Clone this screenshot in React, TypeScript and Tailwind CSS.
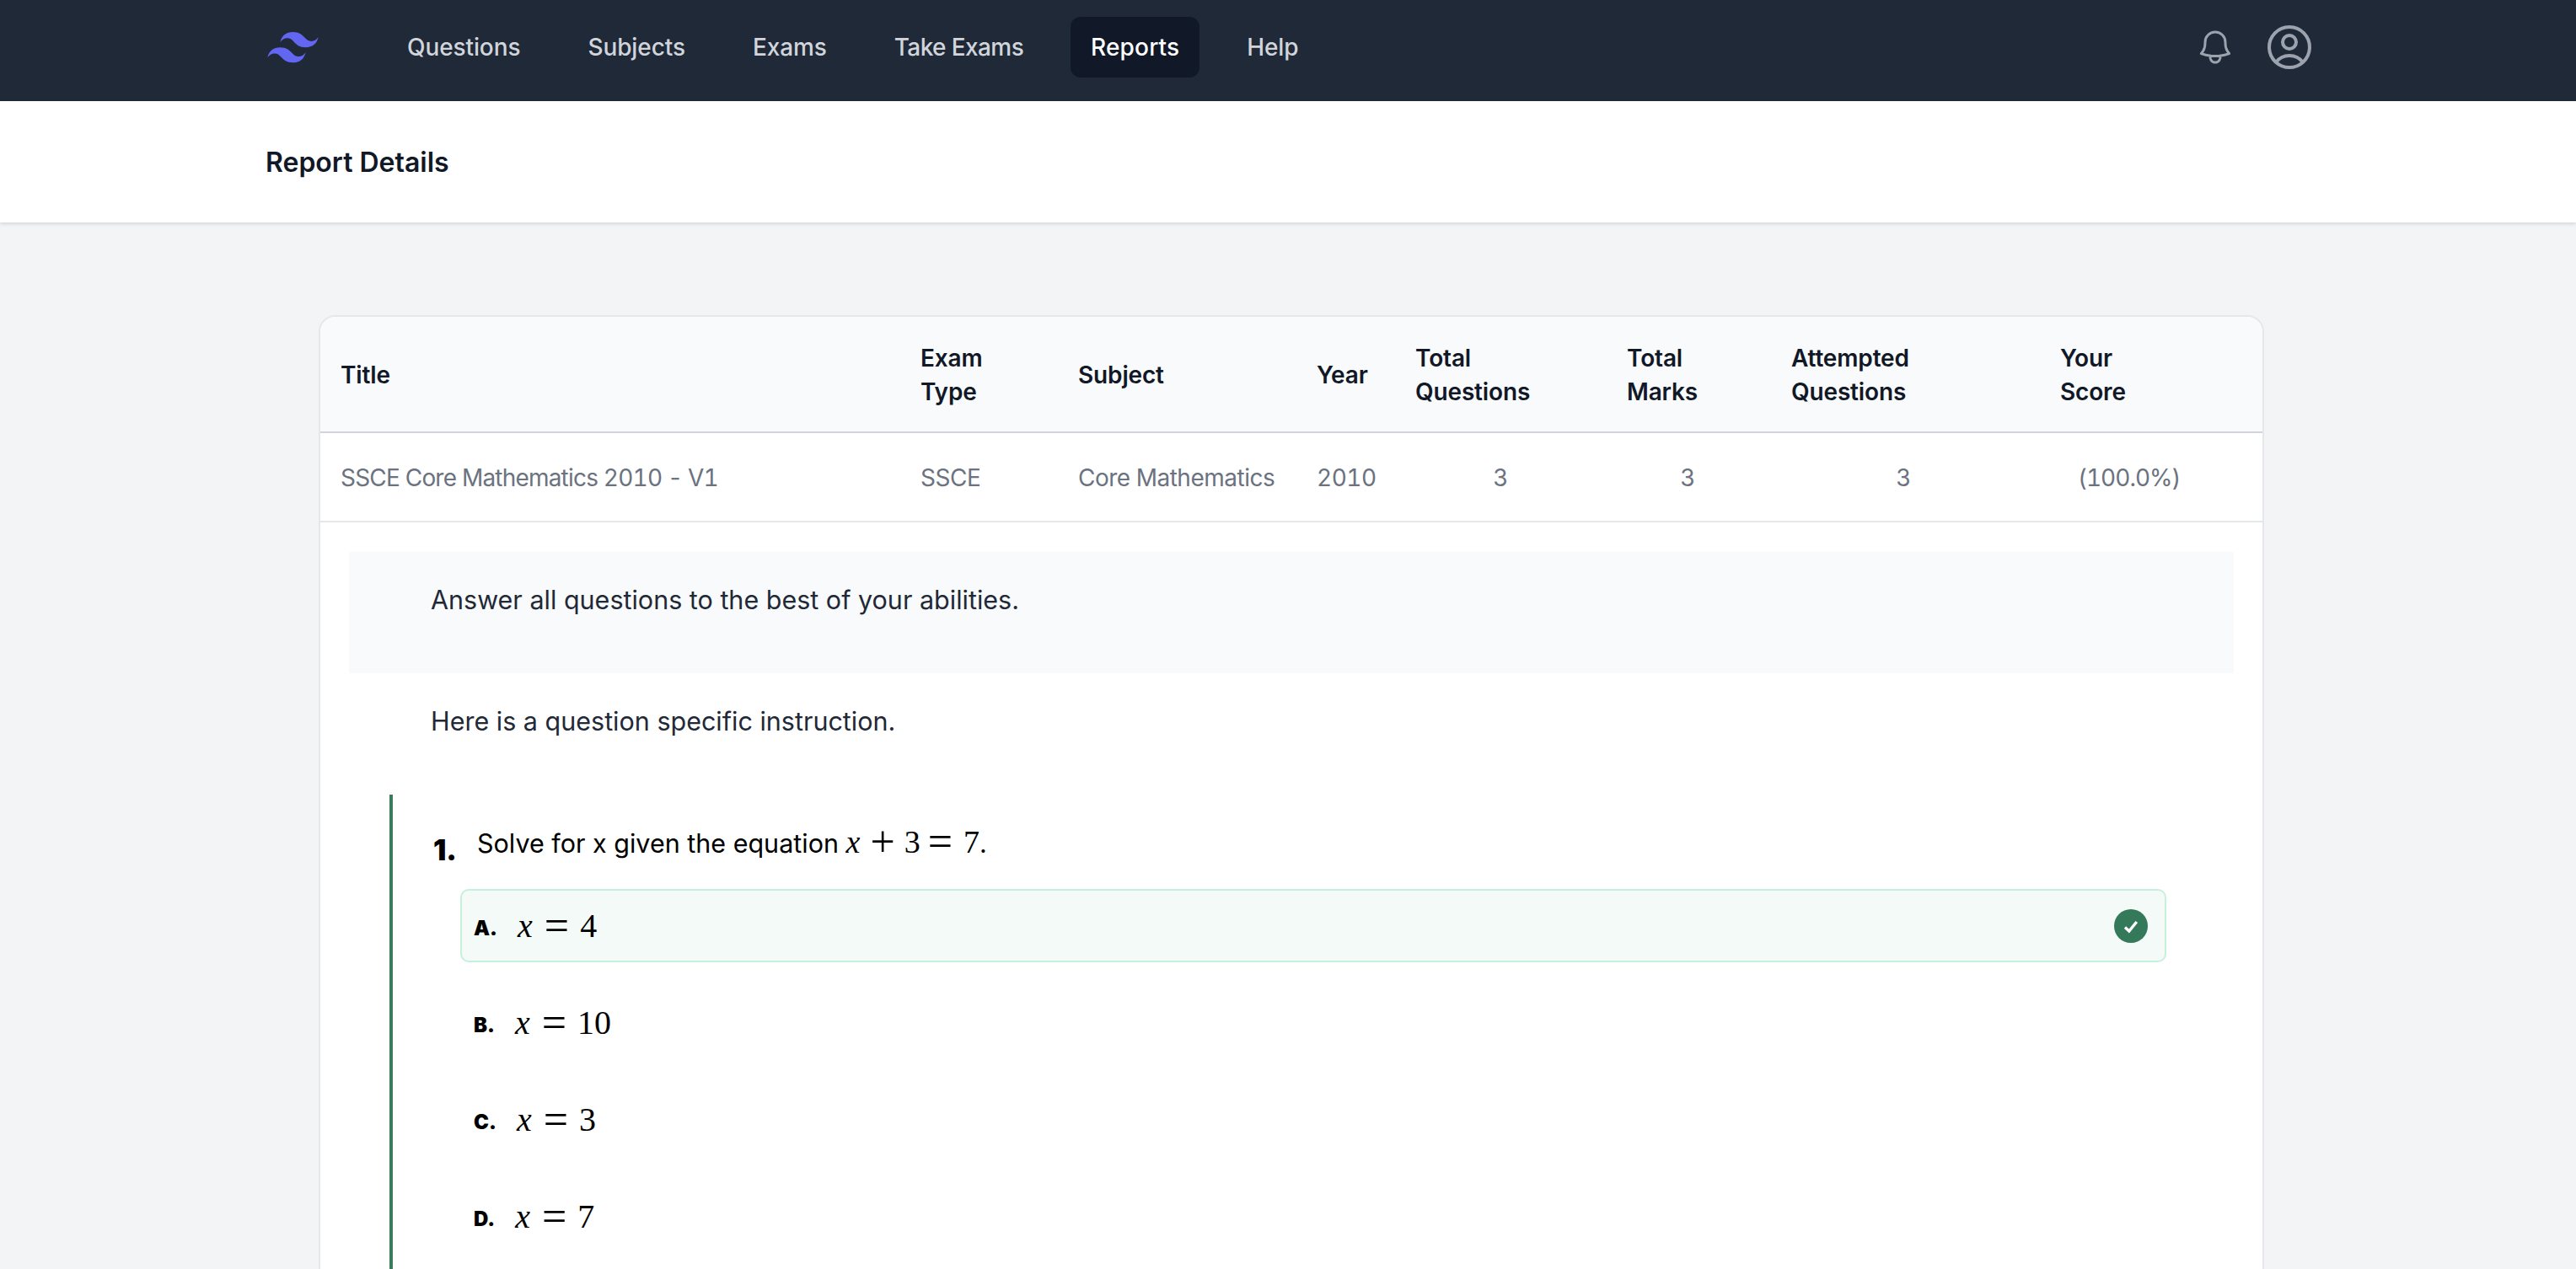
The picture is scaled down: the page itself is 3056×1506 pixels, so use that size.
import type { ReactNode } from "react";

const navItems = ["Questions", "Subjects", "Exams", "Take Exams", "Reports", "Help"];

const options = [
  { label: "A", value: "4", correct: true },
  { label: "B", value: "10", correct: false },
  { label: "C", value: "3", correct: false },
  { label: "D", value: "7", correct: false },
];

function Logo() {
  return (
    <svg viewBox="0 0 54 33" className="ml-[5px] mr-[1px] h-[37px] w-[61px]" fill="#6366f1" aria-hidden="true">
      <path d="M27 0c-7.2 0-11.7 3.6-13.5 10.8 2.7-3.6 5.85-4.95 9.45-4.05 2.054.513 3.522 2.004 5.147 3.653C30.744 13.09 33.808 16.2 40.5 16.2c7.2 0 11.7-3.6 13.5-10.8-2.7 3.6-5.85 4.95-9.45 4.05-2.054-.513-3.522-2.004-5.147-3.653C36.756 3.11 33.692 0 27 0zM13.5 16.2C6.3 16.2 1.8 19.8 0 27c2.7-3.6 5.85-4.95 9.45-4.05 2.054.514 3.522 2.004 5.147 3.653C17.244 29.29 20.308 32.4 27 32.4c7.2 0 11.7-3.6 13.5-10.8-2.7 3.6-5.85 4.95-9.45 4.05-2.054-.513-3.522-2.004-5.147-3.653C23.256 19.31 20.192 16.2 13.5 16.2z" />
    </svg>
  );
}

function Navbar() {
  return (
    <nav className="flex h-[120px] items-center bg-[#1f2937] pr-[308px] pb-[8px] pl-[312px]">
      <Logo />
      <div className="ml-[80px] flex gap-[32px]">
        {navItems.map((item) => (
          <a
            key={item}
            href="#"
            className={
              item === "Reports"
                ? "rounded-[12px] bg-[#111827] px-[24px] py-[16px] text-[28px] leading-[40px] font-medium tracking-[0.15px] text-white"
                : item === "Take Exams"
                  ? "rounded-[12px] px-[24px] py-[16px] text-[28px] leading-[40px] font-medium tracking-[-0.6px] text-[#d1d5db]"
                  : "rounded-[12px] px-[24px] py-[16px] text-[28px] leading-[40px] font-medium tracking-[-0.1px] text-[#d1d5db]"
            }
          >
            {item}
          </a>
        ))}
      </div>
      <div className="ml-auto flex items-center gap-[32px] text-[#9ca3af]">
        <svg viewBox="0 0 24 24" className="h-[48px] w-[48px]" fill="none" stroke="currentColor" strokeWidth="1.5" strokeLinecap="round" strokeLinejoin="round" aria-hidden="true">
          <path d="M14.857 17.082a23.848 23.848 0 005.454-1.31A8.967 8.967 0 0118 9.75v-.7V9A6 6 0 006 9v.75a8.967 8.967 0 01-2.312 6.022c1.733.64 3.56 1.085 5.455 1.31m5.714 0a24.255 24.255 0 01-5.714 0m5.714 0a3 3 0 11-5.714 0" />
        </svg>
        <svg viewBox="0 0 24 24" className="h-[64px] w-[64px]" fill="none" stroke="currentColor" strokeWidth="1.5" strokeLinecap="round" strokeLinejoin="round" aria-hidden="true">
          <path d="M17.982 18.725A7.488 7.488 0 0012 15.75a7.488 7.488 0 00-5.982 2.975m11.964 0a9 9 0 10-11.963 0m11.963 0A8.966 8.966 0 0112 21a8.966 8.966 0 01-5.982-2.275M15 9.75a3 3 0 11-6 0 3 3 0 016 0z" />
        </svg>
      </div>
    </nav>
  );
}

function ReportTable() {
  const th = "px-[24px] pt-[2px] text-left text-[28px] leading-[40px] font-semibold tracking-[-0.15px] text-[#111827]";
  const td = "pt-[2px] text-[28px] leading-[40px] font-normal tracking-[-0.5px] text-[#6b7280] tabular-nums";
  return (
    <table className="w-[2304px] table-fixed border-collapse">
      <thead>
        <tr className="h-[137px] border-b-2 border-[#d1d5db] bg-[#f9fafb]">
          <th className={`${th} w-[688px]`}>Title</th>
          <th className={`${th} w-[187px]`}>Exam<br />Type</th>
          <th className={`${th} w-[283px]`}>Subject</th>
          <th className={`${th} w-[117px]`}>Year</th>
          <th className={`${th} w-[251px]`}>Total<br />Questions</th>
          <th className={`${th} w-[195px]`}>Total<br />Marks</th>
          <th className={`${th} w-[319px]`}>Attempted<br />Questions</th>
          <th className={`${th} w-[264px]`}>Your<br />Score</th>
        </tr>
      </thead>
      <tbody>
        <tr className="h-[106px] border-b-2 border-[#e5e7eb]">
          <td className={`${td} pl-[24px] tracking-[-0.8px]`}>SSCE Core Mathematics 2010 - V1</td>
          <td className={`${td} pl-[24px]`}>SSCE</td>
          <td className={`${td} pl-[24px]`}>Core Mathematics</td>
          <td className={`${td} pl-[24px]`}>2010</td>
          <td className={`${td} pr-[117px] text-right`}>3</td>
          <td className={`${td} pr-[90px] text-right`}>3</td>
          <td className={`${td} pr-[153px] text-right`}>3</td>
          <td className={`${td} pl-[45px] tracking-[-1px]`}>(100.0%)</td>
        </tr>
      </tbody>
    </table>
  );
}

// math runs are set in a serif face, since KaTeX's own fonts aren't available
function MathVar({ children }: { children: ReactNode }) {
  return <span className="italic">{children}</span>;
}

function MathOp({ children, className }: { children: ReactNode; className: string }) {
  return <span className={`align-[-4px] text-[52px] leading-[0] ${className}`}>{children}</span>;
}

function OptionRow({ label, value, correct }: { label: string; value: string; correct: boolean }) {
  return (
    <div
      className={
        correct
          ? "flex h-[87px] items-center rounded-[10px] border-2 border-[#c7f0dc] bg-[#f3faf7] pr-[20px] pl-[14px]"
          : "flex h-[87px] items-center rounded-[10px] border-2 border-transparent pr-[20px] pl-[14px]"
      }
    >
      <span className="mt-[6px] text-[24px] leading-[32px] font-black text-black">{label}.</span>
      <span className="ml-[24px] font-['Liberation_Serif',serif] text-[40px] leading-[48px] text-black">
        <MathVar>x</MathVar>
        <MathOp className="mr-[13px] ml-[14px]">=</MathOp>
        {value}
      </span>
      {correct && (
        <svg viewBox="0 0 40 40" className="ml-auto h-[40px] w-[40px]" aria-hidden="true">
          <circle cx="20" cy="20" r="20" fill="#347a5a" />
          <path d="M13 21.5l4.8 4.5 9-11" fill="none" stroke="#fff" strokeWidth="3.4" />
        </svg>
      )}
    </div>
  );
}

function Question() {
  return (
    <div className="mt-[63px] mr-[114px] ml-[82px] border-l-4 border-[#3a7d5e] pt-[32px] pb-[200px] pl-[48px]">
      <div className="flex items-start">
        <span className="h-[50px] w-[52px] pt-[10px] text-[34px] leading-[48px] font-black text-black">1.</span>
        <p className="h-[50px] pt-[2px] text-[30.5px] leading-[48px] text-black">
          Solve for x given the equation{" "}
          <span className="font-['Liberation_Serif',serif] text-[38px] leading-[0]">
            <MathVar>x</MathVar>
            <MathOp className="mr-[11px] ml-[12px]">+</MathOp>3<MathOp className="mr-[13px] ml-[9px]">=</MathOp>7
          </span>
          .
        </p>
      </div>
      <div className="mt-[30px] ml-[32px] flex flex-col gap-[28px]">
        {options.map((option) => (
          <OptionRow key={option.label} {...option} />
        ))}
      </div>
    </div>
  );
}

export default function App() {
  return (
    <div className="h-[1506px] overflow-hidden bg-[#f3f4f6] font-['Inter',sans-serif]">
      <Navbar />
      <header className="flex h-[144px] items-center bg-white pt-[2px] pl-[315px] shadow-[0_2px_4px_rgba(0,0,0,0.12)]">
        <h1 className="text-[32px] leading-[48px] font-semibold text-[#111827]">Report Details</h1>
      </header>
      <main className="pt-[110px] pl-[378px]">
        <div className="w-[2308px] overflow-hidden rounded-[20px] border-2 border-[#e5e7eb] bg-white">
          <ReportTable />
          <div className="mx-[34px] mt-[35px] h-[144px] bg-[#f9fafb] pt-[33px] pl-[97px] text-[30.5px] leading-[48px] text-[#1f2937]">
            Answer all questions to the best of your abilities.
          </div>
          <p className="mt-[33px] ml-[131px] text-[30.5px] leading-[48px] text-[#1f2937]">
            Here is a question specific instruction.
          </p>
          <Question />
        </div>
      </main>
    </div>
  );
}
